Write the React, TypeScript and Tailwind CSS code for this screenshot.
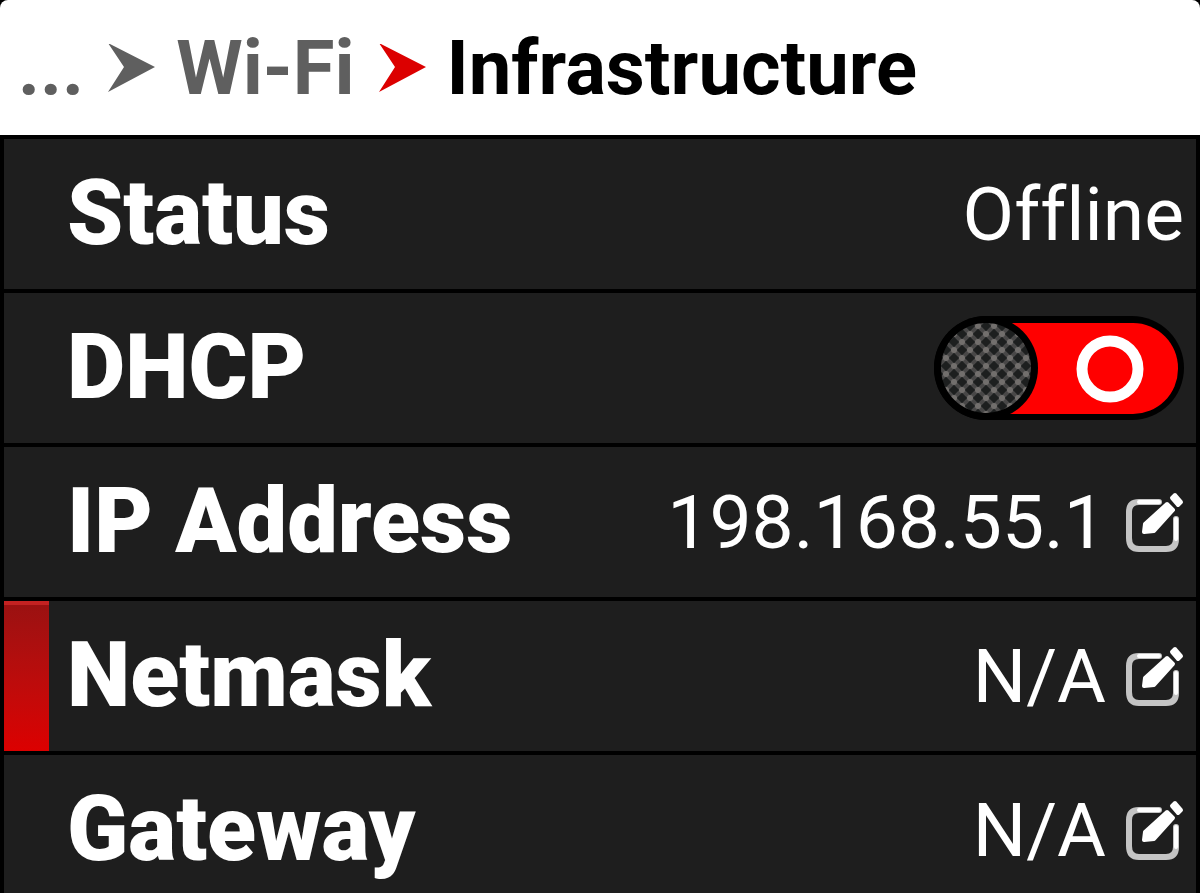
import { useState } from 'react';
import type { ReactNode } from 'react';
import { clsx } from 'clsx';

interface RowProps {
  label: string;
  selected?: boolean;
  children: ReactNode;
}

function Chevron({ className }: { className?: string }) {
  return (
    <svg className={clsx('h-12 w-12 shrink-0', className)} viewBox="0 0 48 48" fill="currentColor" aria-hidden="true">
      <path d="M0 -1 L47 23 L0 48 L16 23 Z" />
    </svg>
  );
}

function EditIcon() {
  return (
    <svg className="h-15 w-15" viewBox="0 0 60 60" fill="none" aria-hidden="true">
      <path d="M35 10 H15 Q5 10 5 20 V46 Q5 57 15 57 H42 Q52 57 52 47 V27" stroke="#c4c4c4" strokeWidth="6" strokeLinecap="round" />
      <path d="M35 10 H15 M52 47 V27" stroke="#fff" strokeWidth="4" strokeLinecap="round" />
      <path d="M43 12 L49 18 L30 39 L20 40 L21 32 Z" fill="#fff" stroke="#fff" strokeWidth="4" strokeLinejoin="round" />
      <path d="M48 6 L51 3 L57 10 L54 13 Z" fill="#fff" stroke="#fff" strokeWidth="4" strokeLinejoin="round" />
    </svg>
  );
}

function Row({ label, selected, children }: RowProps) {
  return (
    <li className="flex h-[150px] shrink-0 items-center bg-[#1e1e1e] pr-3">
      <div
        className={clsx(
          'mr-[18px] w-[45px] shrink-0 self-stretch',
          selected && 'border-t-4 border-[#c42222] bg-linear-to-b from-[#9b1111] to-[#dc0000]'
        )}
      />
      <span className="text-[90px] leading-none font-black whitespace-nowrap">{label}</span>
      <div className="ml-auto flex items-center text-[75px] leading-none font-normal whitespace-nowrap [font-variant-ligatures:none]">
        {children}
      </div>
    </li>
  );
}

function EditableValue({ name, value }: { name: string; value: string }) {
  return (
    <>
      <span>{value}</span>
      <button type="button" aria-label={`Edit ${name}`} className="ml-[18px]">
        <EditIcon />
      </button>
    </>
  );
}

function Toggle({ label }: { label: string }) {
  const [on, setOn] = useState(false);

  return (
    <label className="relative block cursor-pointer">
      <input
        type="checkbox"
        role="switch"
        aria-label={label}
        className="sr-only"
        checked={on}
        onChange={(e) => setOn(e.target.checked)}
      />
      <svg className="h-[104px] w-[250px]" viewBox="0 0 250 104" aria-hidden="true">
        <defs>
          <pattern id="grip" x="44" y="42" width="16" height="16" patternUnits="userSpaceOnUse">
            <rect width="16" height="16" fill="#1d1f1f" />
            <path d="M0 0 L16 16 M16 0 L0 16" stroke="#484747" strokeWidth="4" />
            <circle cx="8" cy="8" r="3" fill="#726f6d" />
            <circle cx="0" cy="0" r="3" fill="#726f6d" />
            <circle cx="16" cy="0" r="3" fill="#726f6d" />
            <circle cx="0" cy="16" r="3" fill="#726f6d" />
            <circle cx="16" cy="16" r="3" fill="#726f6d" />
          </pattern>
        </defs>
        <rect width="250" height="104" rx="52" fill="#000" />
        <rect x="7" y="7" width="237" height="91" rx="45" fill={on ? '#00a000' : '#f00'} />
        {!on && <circle cx="176" cy="53" r="28" fill="none" stroke="#fff" strokeWidth="11" />}
        {on && <path d="M75 24 V80" stroke="#fff" strokeWidth="11" />}
        <g transform={on ? 'translate(146 0)' : undefined}>
          <circle cx="52" cy="52" r="52" fill="#000" />
          <circle cx="52" cy="52" r="45" fill="url(#grip)" />
        </g>
      </svg>
    </label>
  );
}

export default function App() {
  return (
    <div className="flex h-screen flex-col overflow-hidden bg-black font-[Roboto,sans-serif] text-white">
      <nav
        aria-label="Breadcrumb"
        className="flex h-[135px] shrink-0 items-center rounded-t-lg bg-white pl-[18px] text-[76px] leading-none font-bold whitespace-nowrap text-[#5f5f5f]"
      >
        <a href="#menu" className="mr-6">...</a>
        <Chevron />
        <a href="#wifi" className="mr-6 ml-5">Wi-Fi</a>
        <Chevron className="text-[#dc0000]" />
        <span aria-current="page" className="ml-5 text-black">Infrastructure</span>
      </nav>

      <ul className="flex flex-col gap-1 px-1 pt-1">
        <Row label="Status">Offline</Row>
        <Row label="DHCP">
          <Toggle label="DHCP" />
        </Row>
        <Row label="IP Address">
          <EditableValue name="IP Address" value="198.168.55.1" />
        </Row>
        <Row label="Netmask" selected>
          <EditableValue name="Netmask" value="N/A" />
        </Row>
        <Row label="Gateway">
          <EditableValue name="Gateway" value="N/A" />
        </Row>
      </ul>
    </div>
  );
}
